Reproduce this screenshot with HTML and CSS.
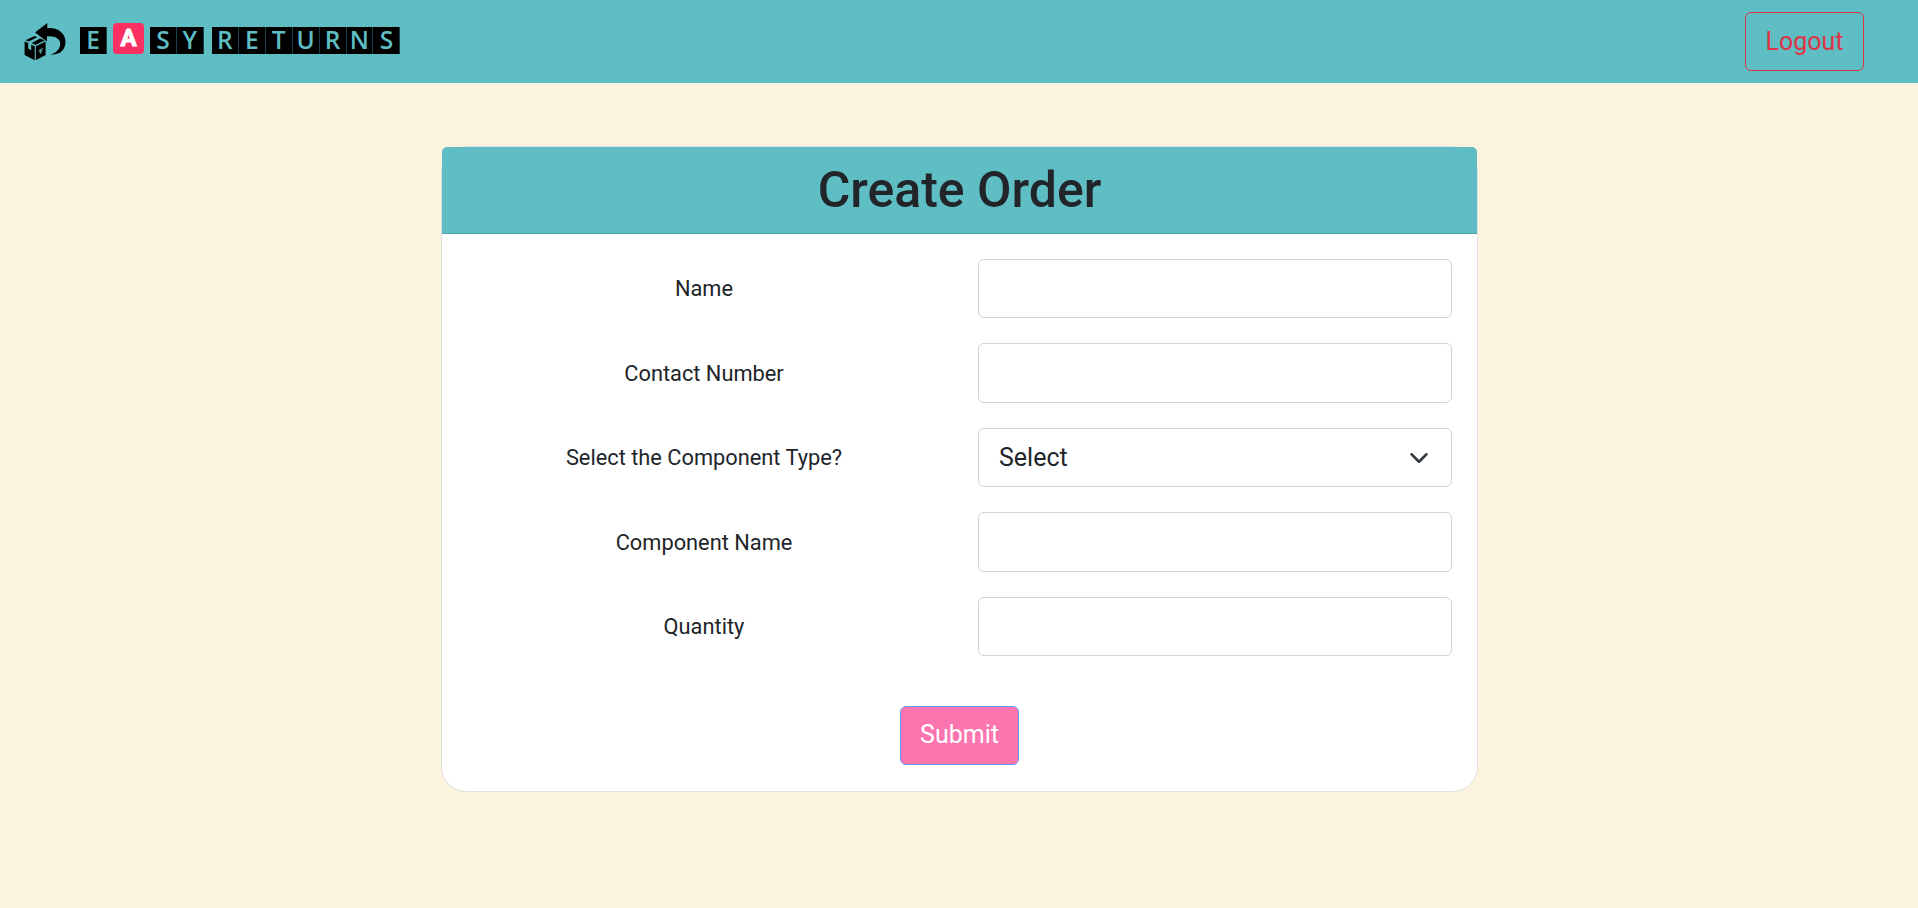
FILE: index.html
```html
<!DOCTYPE html>
<html lang="en">
<head>
<meta charset="utf-8">
<title>Easy Returns</title>
<link rel="stylesheet" href="styles.css">
</head>
<body>
<header class="navbar">
  <div class="brand">
    <svg class="brand-icon" viewBox="0 0 42 38" width="42" height="38" aria-hidden="true">
      <path d="M11 9.500 23.300 0V5.200C34 4.200 41.300 10.500 41.500 18.500C41.600 26.500 36 32.500 26.500 31.500C33 29.500 36.500 25.500 36.200 20C36 15.500 30.500 12.500 23 13.300V18.500Z"/>
      <path d="M.6 18.500 4.200 20.100V25.600L7.200 27.200V21.700L10.700 23.300V37.200L.6 32Z"/>
      <path d="M11.800 23.300 21.600 18.600V32L11.800 37.200Z"/>
      <path d="M1.500 17.200 10.600 13.100 13.300 14.200 4.700 18.600ZM7.700 20.100 16 15.400 20.800 17.300 11.400 21.900Z"/>
      <path class="mark" d="M14.600 27.600 19 25.500M16.800 27V30.800M15.200 29.200 18.300 27.600"/>
    </svg>
    <div class="tiles">
      <div class="word"><span class="tile">E</span><span class="tile-a">A</span><span class="tile">S</span><span class="tile">Y</span></div>
      <div class="word"><span class="tile">R</span><span class="tile">E</span><span class="tile">T</span><span class="tile">U</span><span class="tile">R</span><span class="tile">N</span><span class="tile">S</span></div>
    </div>
  </div>
  <button class="btn btn-logout" type="button">Logout</button>
</header>
<main class="card">
  <h1 class="card-header">Create Order</h1>
  <form class="card-body">
    <div class="row"><label for="name">Name</label><input class="control" id="name" type="text"></div>
    <div class="row"><label for="contact">Contact Number</label><input class="control" id="contact" type="text"></div>
    <div class="row"><label for="type">Select the Component Type?</label>
      <div class="control select" id="type"><span>Select</span>
        <svg viewBox="0 0 16 16" width="20" height="20" aria-hidden="true"><path d="m2 5 6 6 6-6" fill="none" stroke="#343a40" stroke-width="2" stroke-linecap="round" stroke-linejoin="round"/></svg>
      </div>
    </div>
    <div class="row"><label for="component">Component Name</label><input class="control" id="component" type="text"></div>
    <div class="row"><label for="quantity">Quantity</label><input class="control" id="quantity" type="text"></div>
    <button class="btn btn-submit" type="button">Submit</button>
  </form>
</main>
</body>
</html>
```
FILE: styles.css
```css
* { box-sizing: border-box; }
body {
  margin: 0;
  min-height: 100vh;
  background: #fdf4e0;
  color: #212529;
  font-family: Roboto, sans-serif;
}
.navbar {
  display: flex;
  justify-content: space-between;
  align-items: flex-start;
  height: 83px;
  padding: 12px 54px 0 24px;
  background: #5fbdc4;
}
.brand { display: flex; align-items: flex-start; gap: 14px; }
.brand-icon { display: block; margin-top: 11px; }
.brand-icon .mark { fill: none; stroke: #5fbdc4; stroke-width: 1; }
.tiles { display: flex; gap: 8px; margin-top: 10px; }
.word { display: flex; align-items: flex-end; height: 32px; }
.tile {
  width: 26.95px;
  height: 27px;
  border-right: 1px solid #16404a;
  background: #000;
  color: #5fbdc4;
  font: 600 24.5px/26px "Open Sans", sans-serif;
  text-align: center;
}
.tile-a {
  width: 31px;
  height: 31px;
  margin: 0 6px 0;
  border-radius: 4px;
  background: #fb3062;
  color: #fff;
  font: 700 24px/31px Roboto, sans-serif;
  text-align: center;
  -webkit-text-stroke: 1px #fff;
  stroke-linejoin: round;
}
.btn {
  height: 59px;
  padding: 0;
  border: 1px solid;
  border-radius: 6px;
  font: 400 25px/36px Roboto, sans-serif;
}
.btn-logout { width: 119px; background: transparent; border-color: #dc3545; color: #dc3545; }
.card {
  width: 1037px;
  height: 646px;
  margin: 63px auto 0 441px;
  border: 1px solid #dfdfdf;
  border-radius: 25px;
  background: #fff;
}
.card-header {
  height: 87px;
  margin: 0;
  border-bottom: 1px solid #4fa1a8;
  border-radius: 5px 5px 0 0;
  background: #5fbdc4;
  font-size: 50px;
  font-weight: 500;
  line-height: 86px;
  text-align: center;
}
.card-body { display: flex; flex-direction: column; gap: 25px; padding: 25px; }
.row {
  display: grid;
  grid-template-columns: 1fr 1fr;
  column-gap: 37px;
  align-items: center;
  height: 59.45px;
}
label { font-size: 21.8px; line-height: 33px; text-align: center; }
.control {
  width: 100%;
  height: 59.45px;
  padding: 10px 20px;
  border: 1px solid #ced4da;
  border-radius: 6px;
  background: #fff;
  font: 400 25px/37px Roboto, sans-serif;
}
.select { display: flex; align-items: center; justify-content: space-between; padding-right: 22px; }
.btn-submit {
  align-self: center;
  width: 119px;
  margin-top: 24.8px;
  border-color: #629bff;
  background: #fd75af;
  color: #fff;
}
```
